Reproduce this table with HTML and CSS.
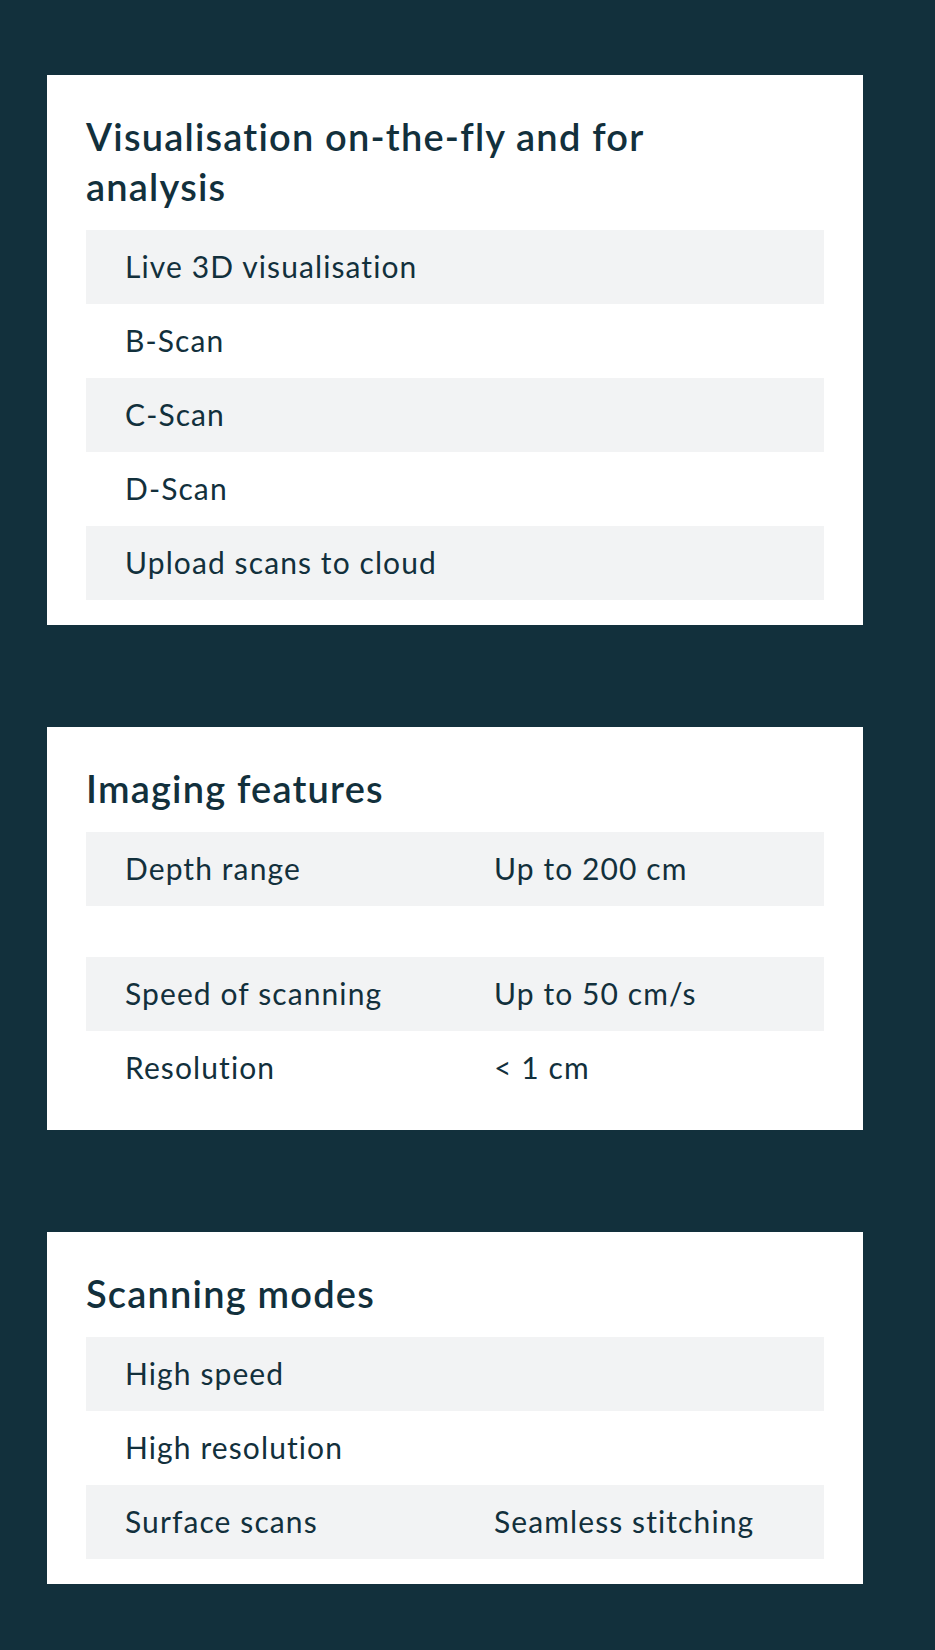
FILE: index.html
```html
<!DOCTYPE html>
<html lang="en">
<head>
  <meta charset="UTF-8" />
  <meta name="viewport" content="width=device-width, initial-scale=1.0"/>
  <title>Specifications</title>
  <link rel="stylesheet" href="styles.css">
</head>
<body>
  <div class="page">
    <div class="card">
      <h2>Visualisation on-the-fly and for analysis</h2>
      <div class="rows">
        <div class="row"><div class="cell">Live 3D visualisation</div><div class="cell"></div></div>
        <div class="row"><div class="cell">B-Scan</div><div class="cell"></div></div>
        <div class="row"><div class="cell">C-Scan</div><div class="cell"></div></div>
        <div class="row"><div class="cell">D-Scan</div><div class="cell"></div></div>
        <div class="row"><div class="cell">Upload scans to cloud</div><div class="cell"></div></div>
      </div>
    </div>

    <div class="card">
      <h2>Imaging features</h2>
      <div class="rows">
        <div class="row"><div class="cell">Depth range</div><div class="cell">Up to 200 cm</div></div>
        <div class="row empty"></div>
        <div class="row"><div class="cell">Speed of scanning</div><div class="cell">Up to 50 cm/s</div></div>
        <div class="row"><div class="cell">Resolution</div><div class="cell">&lt; 1 cm</div></div>
      </div>
    </div>

    <div class="card">
      <h2>Scanning modes</h2>
      <div class="rows">
        <div class="row"><div class="cell">High speed</div><div class="cell"></div></div>
        <div class="row"><div class="cell">High resolution</div><div class="cell"></div></div>
        <div class="row"><div class="cell">Surface scans</div><div class="cell">Seamless stitching</div></div>
      </div>
    </div>
  </div>
</body>
</html>
```

FILE: styles.css
```css
body {
  margin: 0;
  padding: 0;
  font-family: 'Lato', 'Noto Sans', sans-serif;
  background: #12303c;
  color: #12303c;
}
.page {
  display: flex;
  flex-direction: column;
  gap: 102px;
  padding: 75px 72px 65px 47px;
}
.card {
  background: #fff;
  padding: 36px 39px 25px;
}
h2 {
  margin: 0 0 19px;
  font-size: 38px;
  line-height: 50px;
  font-weight: 600;
  letter-spacing: 1.2px;
  max-width: 600px;
}
.row {
  display: grid;
  grid-template-columns: 1fr 1fr;
  height: 74px;
  align-items: center;
}
.row:nth-child(odd) {
  background: #f2f3f4;
}
.row.empty {
  height: 51px;
}
.cell {
  padding: 0 0 3px 39px;
  font-size: 30px;
  line-height: 34px;
  letter-spacing: 1.1px;
}
```
